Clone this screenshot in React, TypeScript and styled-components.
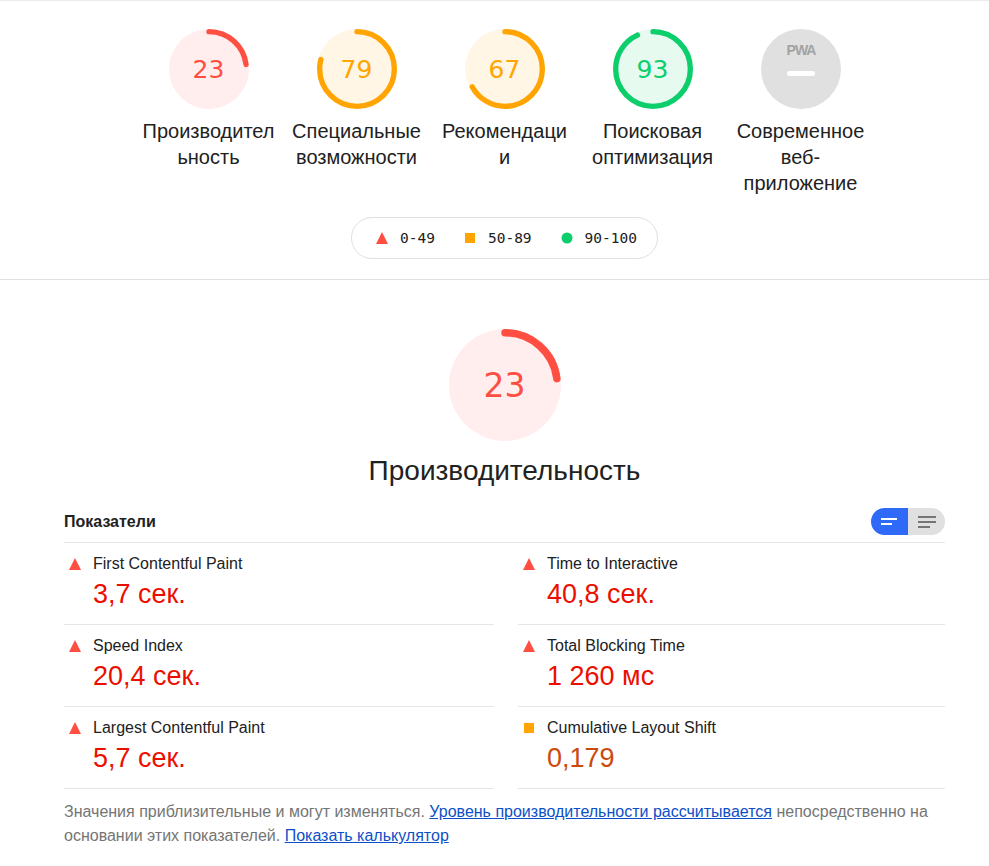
import styled, { createGlobalStyle } from "styled-components";

type Level = "fail" | "average" | "pass" | "na";

const palette: Record<Level, { arc: string; bg: string; text: string }> = {
  fail: { arc: "#ff4e42", bg: "#ffeeed", text: "#ff4e42" },
  average: { arc: "#ffa400", bg: "#fff6e6", text: "#ffa400" },
  pass: { arc: "#0cce6b", bg: "#e7faf0", text: "#0cce6b" },
  na: { arc: "#e0e0e0", bg: "#e0e0e0", text: "#9e9e9e" },
};

const categories: { score: number; label: string; level: Level }[] = [
  { score: 23, label: "Производительность", level: "fail" },
  { score: 79, label: "Специальные возможности", level: "average" },
  { score: 67, label: "Рекомендации", level: "average" },
  { score: 93, label: "Поисковая оптимизация", level: "pass" },
];

const metrics: { title: string; value: string; level: Level }[] = [
  { title: "First Contentful Paint", value: "3,7 сек.", level: "fail" },
  { title: "Time to Interactive", value: "40,8 сек.", level: "fail" },
  { title: "Speed Index", value: "20,4 сек.", level: "fail" },
  { title: "Total Blocking Time", value: "1 260 мс", level: "fail" },
  { title: "Largest Contentful Paint", value: "5,7 сек.", level: "fail" },
  { title: "Cumulative Layout Shift", value: "0,179", level: "average" },
];

const GlobalStyle = createGlobalStyle`
  html, body {
    margin: 0;
    padding: 0;
    background: #ffffff;
  }
  body {
    font-family: "Liberation Sans", Arial, sans-serif;
    color: #212121;
  }
`;

const Gauge = ({ score, level, size }: { score: number; level: Level; size: number }) => {
  const c = palette[level];
  const r = 56;
  const len = 2 * Math.PI * r;
  const dash = (score / 100) * len;
  return (
    <GaugeBox $size={size}>
      <svg width={size} height={size} viewBox="0 0 120 120">
        <circle cx="60" cy="60" r={60} fill={c.bg} />
        <circle
          cx="60"
          cy="60"
          r={r}
          fill="none"
          stroke={c.arc}
          strokeWidth="8"
          strokeLinecap="round"
          strokeDasharray={`${dash} ${len}`}
          transform="rotate(-90 60 60)"
        />
      </svg>
      <GaugeNumber $size={size} $color={c.text}>
        {score}
      </GaugeNumber>
    </GaugeBox>
  );
};

const PwaGauge = () => (
  <GaugeBox $size={80}>
    <svg width="80" height="80" viewBox="0 0 80 80">
      <circle cx="40" cy="40" r="40" fill="#e0e0e0" />
      <text
        x="40"
        y="26"
        textAnchor="middle"
        fontFamily="'Liberation Sans', Arial, sans-serif"
        fontWeight="bold"
        fontSize="14"
        letterSpacing="-1"
        fill="#a3a3a3"
      >
        PWA
      </text>
      <rect x="26" y="42" width="28" height="5" rx="2.5" fill="#ffffff" />
    </svg>
  </GaugeBox>
);

const BarsIcon = ({ color, lines }: { color: string; lines: number[] }) => (
  <svg width="18" height="14" viewBox="0 0 18 14">
    {lines.map((w, i) => (
      <rect key={i} x="0" y={i * 5 + (lines.length === 2 ? 3 : 1)} width={w} height="2" fill={color} />
    ))}
  </svg>
);

const LevelIcon = ({ level }: { level: Level }) =>
  level === "fail" ? (
    <svg width="12" height="12" viewBox="0 0 12 12">
      <polygon points="6,0 12,12 0,12" fill="#ff4e42" />
    </svg>
  ) : level === "average" ? (
    <svg width="12" height="12" viewBox="0 0 12 12">
      <rect x="1" y="1" width="10" height="10" fill="#ffa400" />
    </svg>
  ) : (
    <svg width="12" height="12" viewBox="0 0 12 12">
      <circle cx="6" cy="6" r="5.5" fill="#0cce6b" />
    </svg>
  );

export default function App() {
  return (
    <Page>
      <GlobalStyle />
      <TopSection>
        <GaugeRow>
          {categories.map((cat) => (
            <GaugeWrapper key={cat.label}>
              <Gauge score={cat.score} level={cat.level} size={80} />
              <GaugeLabel>{cat.label}</GaugeLabel>
            </GaugeWrapper>
          ))}
          <GaugeWrapper>
            <PwaGauge />
            <GaugeLabel>Современное веб-приложение</GaugeLabel>
          </GaugeWrapper>
        </GaugeRow>
        <Legend>
          <LegendItem>
            <LevelIcon level="fail" />
            <span>0-49</span>
          </LegendItem>
          <LegendItem>
            <LevelIcon level="average" />
            <span>50-89</span>
          </LegendItem>
          <LegendItem>
            <LevelIcon level="pass" />
            <span>90-100</span>
          </LegendItem>
        </Legend>
      </TopSection>

      <PerfSection>
        <Gauge score={23} level="fail" size={112} />
        <PerfTitle>Производительность</PerfTitle>

        <MetricsHeader>
          <MetricsHeading>Показатели</MetricsHeading>
          <Toggle>
            <ToggleHalf $active>
              <BarsIcon color="#ffffff" lines={[16, 11]} />
            </ToggleHalf>
            <ToggleHalf>
              <BarsIcon color="#757575" lines={[18, 18, 12]} />
            </ToggleHalf>
          </Toggle>
        </MetricsHeader>

        <MetricGrid>
          {metrics.map((m) => (
            <Metric key={m.title}>
              <IconCell>
                <LevelIcon level={m.level} />
              </IconCell>
              <MetricBody>
                <MetricTitle>{m.title}</MetricTitle>
                <MetricValue $level={m.level}>{m.value}</MetricValue>
              </MetricBody>
            </Metric>
          ))}
        </MetricGrid>

        <Note>
          <span>Значения приблизительные и могут изменяться. </span>
          <NoteLink href="#">Уровень производительности рассчитывается</NoteLink>
          <span> непосредственно на</span> <span>основании этих показателей. </span>
          <NoteLink href="#">Показать калькулятор</NoteLink>
        </Note>
      </PerfSection>
    </Page>
  );
}

const Page = styled.div`
  width: 100%;
  border-top: 1px solid #ebebeb;
`;

const TopSection = styled.section`
  display: flex;
  flex-direction: column;
  align-items: center;
  padding: 28px 44px 20px 64px;
  border-bottom: 1px solid #e0e0e0;
`;

const GaugeRow = styled.div`
  display: flex;
  justify-content: center;
`;

const GaugeWrapper = styled.div`
  width: 148px;
  display: flex;
  flex-direction: column;
  align-items: center;
`;

const GaugeBox = styled.div<{ $size: number }>`
  position: relative;
  width: ${(p) => p.$size}px;
  height: ${(p) => p.$size}px;

  svg {
    display: block;
  }
`;

const GaugeNumber = styled.div<{ $size: number; $color: string }>`
  position: absolute;
  inset: 0;
  display: flex;
  align-items: center;
  justify-content: center;
  font-family: "DejaVu Sans", "Noto Sans", sans-serif;
  font-size: ${(p) => (p.$size > 100 ? 33 : 25)}px;
  color: ${(p) => p.$color};
`;

const GaugeLabel = styled.div`
  width: 134px;
  margin-top: 9px;
  font-size: 20px;
  line-height: 26px;
  text-align: center;
  color: #212121;
  overflow-wrap: anywhere;
`;

const Legend = styled.div`
  display: flex;
  align-items: center;
  gap: 29px;
  margin-top: 21px;
  padding: 0 20px 0 24px;
  height: 40px;
  border: 1px solid #e0e0e0;
  border-radius: 21px;
  font-family: "DejaVu Sans Mono", "Liberation Mono", monospace;
  font-size: 14.5px;
  color: #212121;
`;

const LegendItem = styled.div`
  display: flex;
  align-items: center;
  gap: 12px;
`;

const PerfSection = styled.section`
  display: flex;
  flex-direction: column;
  align-items: center;
  padding: 49px 44px 0 64px;
`;

const PerfTitle = styled.h2`
  margin: 12px 0 0;
  font-size: 28px;
  line-height: 36px;
  font-weight: normal;
  color: #212121;
`;

const MetricsHeader = styled.div`
  align-self: stretch;
  display: flex;
  align-items: center;
  justify-content: space-between;
  margin-top: 19px;
  padding-bottom: 7px;
  border-bottom: 1px solid #e6e6e6;
`;

const MetricsHeading = styled.div`
  font-size: 16px;
  font-weight: bold;
  color: #212121;
`;

const Toggle = styled.div`
  display: flex;
  height: 27px;
  border-radius: 14px;
  overflow: hidden;
`;

const ToggleHalf = styled.div<{ $active?: boolean }>`
  width: 37px;
  display: flex;
  align-items: center;
  justify-content: center;
  background: ${(p) => (p.$active ? "#2e6af7" : "#e0e0e0")};

  svg {
    display: block;
  }
`;

const MetricGrid = styled.div`
  align-self: stretch;
  display: grid;
  grid-template-columns: 430px 1fr;
  column-gap: 24px;
`;

const Metric = styled.div`
  display: flex;
  gap: 12px;
  height: 82px;
  padding: 11px 0 0 5px;
  box-sizing: border-box;
  border-bottom: 1px solid #e6e6e6;
`;

const IconCell = styled.div`
  width: 12px;
  padding-top: 4px;

  svg {
    display: block;
  }
`;

const MetricBody = styled.div`
  display: flex;
  flex-direction: column;
`;

const MetricTitle = styled.div`
  font-size: 16px;
  line-height: 20px;
  color: #212121;
`;

const MetricValue = styled.div<{ $level: Level }>`
  margin-top: 4px;
  font-size: 27px;
  line-height: 32px;
  color: ${(p) => (p.$level === "fail" ? "#eb0f00" : p.$level === "average" ? "#cc4a0c" : "#018642")};
`;

const Note = styled.p`
  align-self: stretch;
  margin: 11px 0 0;
  font-size: 16px;
  line-height: 24px;
  color: #757575;
`;

const NoteLink = styled.a`
  color: #0c50c7;
  text-decoration: underline;
`;
